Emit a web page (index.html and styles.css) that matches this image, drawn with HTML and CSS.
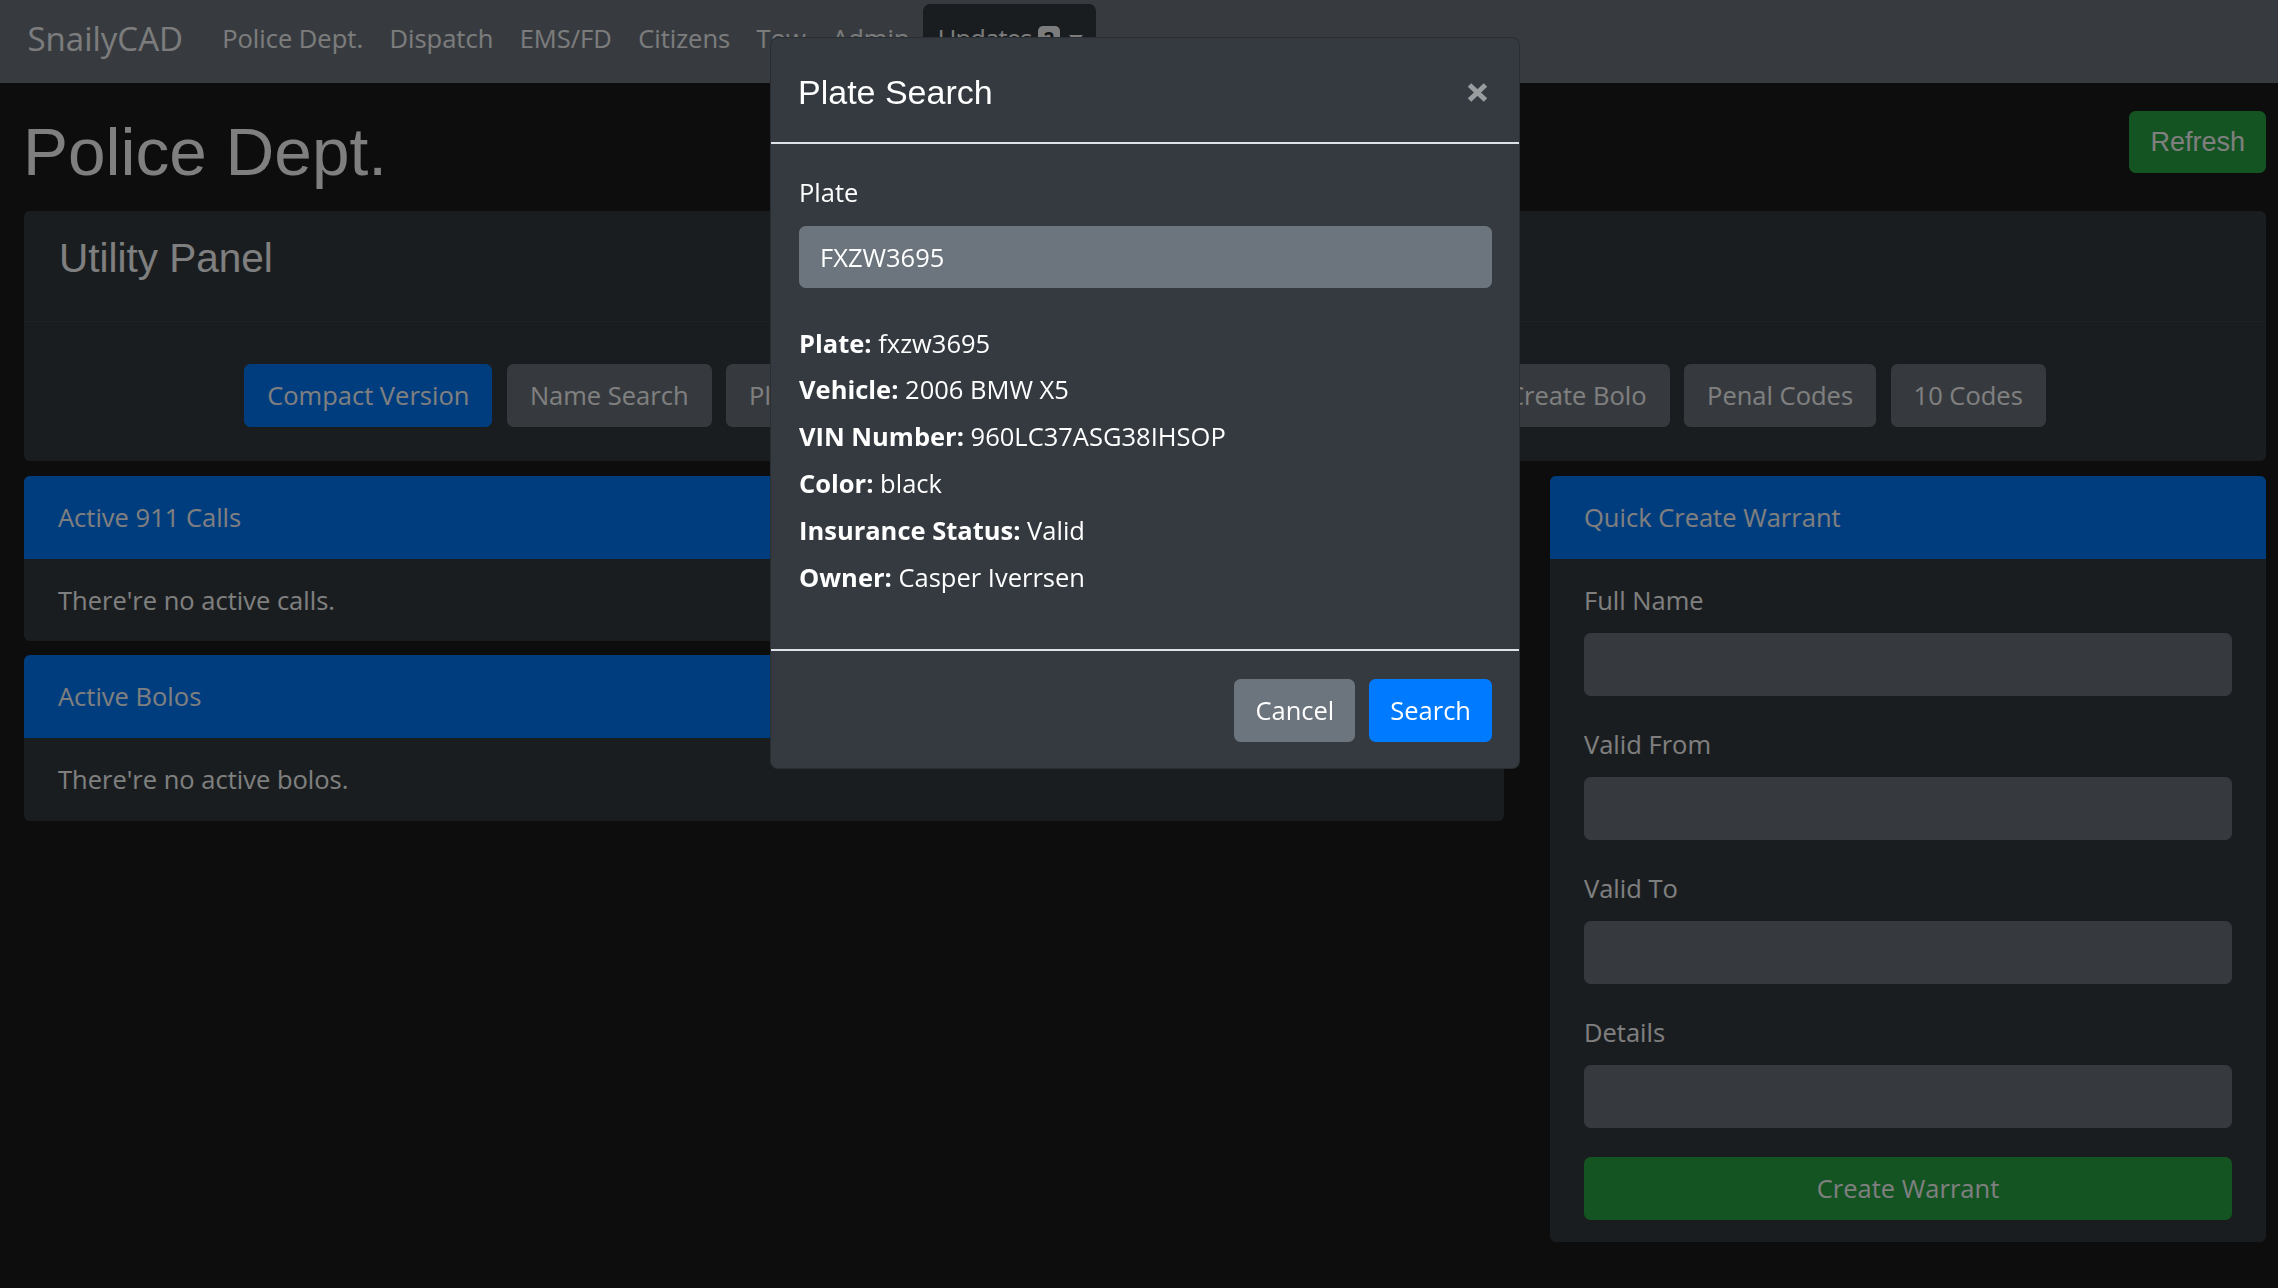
FILE: index.html
```html
<!DOCTYPE html>
<html lang="en">
<head>
<meta charset="utf-8">
<title>SnailyCAD - Police Dept.</title>
<link rel="stylesheet" href="styles.css">
</head>
<body>
<nav class="navbar">
  <span class="brand">SnailyCAD</span>
  <ul class="nav">
    <li><a class="nav-link">Police Dept.</a></li>
    <li><a class="nav-link">Dispatch</a></li>
    <li><a class="nav-link">EMS/FD</a></li>
    <li><a class="nav-link">Citizens</a></li>
    <li><a class="nav-link">Tow</a></li>
    <li><a class="nav-link">Admin</a></li>
    <li class="nav-dropdown"><a class="nav-link dropdown-link">Updates <span class="badge">2</span><span class="caret"></span></a></li>
  </ul>
</nav>

<main class="page">
  <div class="page-head">
    <h1 class="page-title">Police Dept.</h1>
    <button class="btn btn-success btn-refresh">Refresh</button>
  </div>

  <section class="card utility">
    <div class="card-header utility-header">
      <h3 class="utility-title">Utility Panel</h3>
    </div>
    <div class="utility-body">
      <button class="btn btn-primary">Compact Version</button>
      <button class="btn btn-secondary">Name Search</button>
      <button class="btn btn-secondary">Plate Search</button>
      <button class="btn btn-secondary">Weapon Search</button>
      <button class="btn btn-secondary">Create Arrest Report</button>
      <button class="btn btn-secondary">Create Bolo</button>
      <button class="btn btn-secondary">Penal Codes</button>
      <button class="btn btn-secondary">10 Codes</button>
    </div>
  </section>

  <div class="cols">
    <div class="col-left">
      <section class="card">
        <div class="card-header blue">Active 911 Calls</div>
        <div class="card-body">There're no active calls.</div>
      </section>
      <section class="card">
        <div class="card-header blue">Active Bolos</div>
        <div class="card-body">There're no active bolos.</div>
      </section>
    </div>
    <section class="card">
      <div class="card-header blue">Quick Create Warrant</div>
      <div class="card-body">
        <div class="field"><label class="field-label">Full Name</label><div class="input"></div></div>
        <div class="field"><label class="field-label">Valid From</label><div class="input"></div></div>
        <div class="field"><label class="field-label">Valid To</label><div class="input"></div></div>
        <div class="field"><label class="field-label">Details</label><div class="input"></div></div>
        <button class="btn btn-success btn-block">Create Warrant</button>
      </div>
    </section>
  </div>
</main>

<div class="backdrop"></div>

<div class="modal-wrap">
  <div class="modal">
    <div class="modal-header">
      <h5 class="modal-title">Plate Search</h5>
      <button class="close" aria-label="Close">
        <svg width="21" height="19" viewBox="0 0 21 19"><path d="M2.5 2 L18.5 17 M18.5 2 L2.5 17" stroke="#fff" stroke-width="5" stroke-linecap="butt"/></svg>
      </button>
    </div>
    <div class="modal-body">
      <label class="modal-label">Plate</label>
      <div class="modal-input">FXZW3695</div>
      <div class="info">
        <div class="info-row"><b>Plate:</b> fxzw3695</div>
        <div class="info-row"><b>Vehicle:</b> 2006 BMW X5</div>
        <div class="info-row"><b>VIN Number:</b> 960LC37ASG38IHSOP</div>
        <div class="info-row"><b>Color:</b> black</div>
        <div class="info-row"><b>Insurance Status:</b> Valid</div>
        <div class="info-row"><b>Owner:</b> Casper Iverrsen</div>
      </div>
    </div>
    <div class="modal-footer">
      <button class="btn btn-secondary">Cancel</button>
      <button class="btn btn-primary">Search</button>
    </div>
  </div>
</div>
</body>
</html>
```

FILE: styles.css
```css
* { box-sizing: border-box; }

html, body { margin: 0; }

body {
  width: 2278px;
  height: 1288px;
  overflow: hidden;
  background: #1a1a1a;
  color: #fff;
  font-family: "Open Sans", "Noto Sans", sans-serif;
  font-size: 25.5px;
  line-height: 1.5;
}

/* ---------- navbar ---------- */
.navbar {
  height: 83px;
  background: #6f7780;
  display: flex;
  align-items: center;
  padding: 0 26px 6.5px 27.5px;
}
.brand {
  font-size: 33px;
  line-height: 1.5;
  color: #f8f9fa;
  margin-right: 26px;
}
.nav {
  display: flex;
  align-items: center;
  align-self: stretch;
  list-style: none;
  margin: 0;
  padding: 0;
}
.nav-link {
  display: block;
  padding: 0 13.2px;
  color: #f8f9fa;
  line-height: 1.5;
}
.nav-dropdown {
  align-self: stretch;
  margin-top: 4px;
  background: #343a40;
  border-radius: 7px 7px 0 0;
  display: flex;
  align-items: center;
  padding-bottom: 4px;
}
.dropdown-link {
  padding: 0 13px 0 15px;
  letter-spacing: -0.8px;
}
.badge {
  display: inline-block;
  background: #f8f9fa;
  color: #212529;
  font-size: 19px;
  font-weight: 700;
  line-height: 1;
  padding: 4px 6px;
  border-radius: 5px;
  vertical-align: 2px;
  letter-spacing: 0;
}
.caret {
  display: inline-block;
  margin-left: 9px;
  vertical-align: 5px;
  border-top: 8px solid #f8f9fa;
  border-left: 7.5px solid transparent;
  border-right: 7.5px solid transparent;
}

/* ---------- page ---------- */
.page { padding: 28px 12px 0 24px; }

.page-head {
  display: flex;
  justify-content: space-between;
  align-items: flex-start;
  margin-bottom: 19px;
}
.page-title {
  margin: 1px 0 0 -1px;
  font-family: "Liberation Sans", Arial, sans-serif;
  font-weight: 400;
  font-size: 67.5px;
  line-height: 80px;
}

/* ---------- buttons ---------- */
.btn {
  display: inline-flex;
  align-items: center;
  justify-content: center;
  height: 63px;
  padding: 0 23px;
  border: 0;
  border-radius: 6.5px;
  color: #fff;
  font-family: "Open Sans", "Noto Sans", sans-serif;
  font-size: 25.5px;
  line-height: 1;
  white-space: nowrap;
}
.btn-primary { background: #007bff; }
.btn-secondary { background: #6c757d; }
.btn-success { background: #28a745; }
.btn-refresh {
  height: 62px;
  padding: 0 21px;
  font-family: "Liberation Sans", Arial, sans-serif;
  font-size: 27px;
}
.btn-block { width: 100%; }

/* ---------- cards ---------- */
.card {
  background: #343a40;
  border-radius: 6px;
  overflow: hidden;
}
.card-header {
  padding: 22px 34px;
  line-height: 39px;
}
.card-header.blue { background: #007bff; }
.card-body {
  padding: 22px 34px;
  line-height: 38.25px;
}

.utility-header {
  padding: 23px 33px 39px 35px;
  border-bottom: 1px solid #3e444b;
}
.utility-title {
  margin: 0;
  font-family: "Liberation Sans", Arial, sans-serif;
  font-weight: 400;
  font-size: 40.5px;
  line-height: 48px;
}
.utility-body {
  display: flex;
  justify-content: center;
  gap: 14.5px;
  padding: 42px 34px 34px;
}

.cols {
  display: grid;
  grid-template-columns: 1fr 716px;
  column-gap: 46px;
  align-items: start;
  margin-top: 15px;
}
.col-left {
  display: flex;
  flex-direction: column;
  gap: 14px;
}

.field { margin-bottom: 29px; }
.field-label {
  display: block;
  line-height: 38px;
  margin-bottom: 14px;
}
.input {
  height: 63px;
  background: #6c757d;
  border-radius: 6.5px;
}

/* ---------- modal ---------- */
.backdrop {
  position: fixed;
  inset: 0;
  background: rgba(0, 0, 0, 0.5);
}
.modal-wrap {
  position: fixed;
  inset: 0;
  display: flex;
  justify-content: center;
  align-items: flex-start;
  padding: 37px 0 0 12px;
}
.modal {
  width: 750px;
  background: #343a40;
  border: 1px solid rgba(0, 0, 0, 0.2);
  border-radius: 8px;
}
.modal-header {
  display: flex;
  justify-content: space-between;
  align-items: flex-start;
  padding: 34px 26px 30px 27px;
  border-bottom: 2px solid #dee2e6;
}
.modal-title {
  margin: 0;
  font-family: "Liberation Sans", Arial, sans-serif;
  font-weight: 400;
  font-size: 34px;
  line-height: 40px;
}
.close {
  display: block;
  width: 21px;
  height: 19px;
  margin: 11px 5px 0 0;
  padding: 0;
  border: 0;
  background: none;
  opacity: 0.5;
}
.close svg { display: block; }

.modal-body { padding: 29px 27px 52.4px 28px; }
.modal-label {
  display: block;
  line-height: 38px;
  margin-bottom: 15px;
}
.modal-input {
  height: 62px;
  background: #6c757d;
  border: 1px solid #6c757d;
  border-radius: 6.5px;
  padding: 0 20px;
  display: flex;
  align-items: center;
  margin-bottom: 35.6px;
}
.info-row {
  line-height: 39px;
  margin-bottom: 7.8px;
}
.info-row:last-child { margin-bottom: 0; }
.info-row b { font-weight: 700; }

.modal-footer {
  display: flex;
  justify-content: flex-end;
  gap: 14px;
  padding: 28px 27px 26px;
  border-top: 2px solid #dee2e6;
}
.modal-footer .btn { padding: 0 21px; }
```
